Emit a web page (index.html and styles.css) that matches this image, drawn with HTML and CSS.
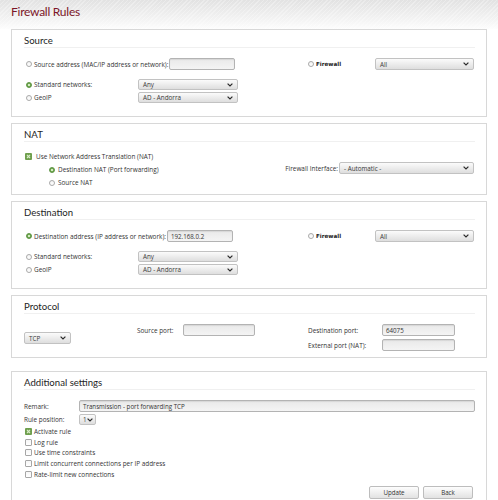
FILE: index.html
```html
<!DOCTYPE html>
<html>
<head>
<meta charset="utf-8">
<title>Firewall Rules</title>
<link rel="stylesheet" href="styles.css">
</head>
<body>
<header class="top"><h1>Firewall Rules</h1></header>
<main class="page">
  <section class="box box-addr">
    <h2>Source</h2>
    <div class="addr-row">
      <div class="addr-left">
        <label class="opt"><span class="radio"></span>Source address (MAC/IP address or network):</label>
        <span class="input w-addr"></span>
      </div>
      <label class="opt"><span class="radio"></span><b class="fw">Firewall</b></label>
      <span class="select w-all">All<svg class="chev" viewBox="0 0 6 4" width="6" height="4"><polyline points="0.6,0.6 3,3 5.4,0.6"/></svg></span>
    </div>
    <div class="net-grid">
      <label class="opt"><span class="radio on"></span>Standard networks:</label>
      <span class="select w-net">Any<svg class="chev" viewBox="0 0 6 4" width="6" height="4"><polyline points="0.6,0.6 3,3 5.4,0.6"/></svg></span>
      <label class="opt"><span class="radio"></span>GeoIP</label>
      <span class="select w-net">AD - Andorra<svg class="chev" viewBox="0 0 6 4" width="6" height="4"><polyline points="0.6,0.6 3,3 5.4,0.6"/></svg></span>
    </div>
  </section>

  <section class="box box-nat">
    <h2>NAT</h2>
    <div class="nat-body">
      <div class="nat-left">
        <label class="opt chk-row"><svg class="check" viewBox="0 0 7 7" width="7" height="7"><rect x="0" y="0" width="7" height="7" rx="1" fill="#6f9f4e"/><path d="M2 2 L5 5 M5 2 L2 5" stroke="#d9ecc8" stroke-width="1.1"/></svg>Use Network Address Translation (NAT)</label>
        <label class="opt sub"><span class="radio on"></span>Destination NAT (Port forwarding)</label>
        <label class="opt sub"><span class="radio"></span>Source NAT</label>
      </div>
      <div class="nat-right">
        <span class="lbl">Firewall Interface:</span>
        <span class="select w-iface">- Automatic -<svg class="chev" viewBox="0 0 6 4" width="6" height="4"><polyline points="0.6,0.6 3,3 5.4,0.6"/></svg></span>
      </div>
    </div>
  </section>

  <section class="box box-addr">
    <h2>Destination</h2>
    <div class="addr-row">
      <div class="addr-left">
        <label class="opt"><span class="radio on"></span>Destination address (IP address or network):</label>
        <span class="input w-addr">192.168.0.2</span>
      </div>
      <label class="opt"><span class="radio"></span><b class="fw">Firewall</b></label>
      <span class="select w-all">All<svg class="chev" viewBox="0 0 6 4" width="6" height="4"><polyline points="0.6,0.6 3,3 5.4,0.6"/></svg></span>
    </div>
    <div class="net-grid">
      <label class="opt"><span class="radio"></span>Standard networks:</label>
      <span class="select w-net">Any<svg class="chev" viewBox="0 0 6 4" width="6" height="4"><polyline points="0.6,0.6 3,3 5.4,0.6"/></svg></span>
      <label class="opt"><span class="radio"></span>GeoIP</label>
      <span class="select w-net">AD - Andorra<svg class="chev" viewBox="0 0 6 4" width="6" height="4"><polyline points="0.6,0.6 3,3 5.4,0.6"/></svg></span>
    </div>
  </section>

  <section class="box box-proto">
    <h2>Protocol</h2>
    <div class="proto-grid">
      <span class="select w-proto">TCP<svg class="chev" viewBox="0 0 6 4" width="6" height="4"><polyline points="0.6,0.6 3,3 5.4,0.6"/></svg></span>
      <span class="lbl src-lbl">Source port:</span>
      <span class="input src-in"></span>
      <span class="lbl dst-lbl">Destination port:</span>
      <span class="input dst-in">64075</span>
      <span class="lbl ext-lbl">External port (NAT):</span>
      <span class="input ext-in"></span>
    </div>
  </section>

  <section class="box box-add">
    <h2>Additional settings</h2>
    <div class="add-grid">
      <span class="lbl">Remark:</span>
      <span class="input w-remark">Transmission - port forwarding TCP</span>
      <span class="lbl">Rule position:</span>
      <span class="select w-pos">1<svg class="chev" viewBox="0 0 6 4" width="6" height="4"><polyline points="0.6,0.6 3,3 5.4,0.6"/></svg></span>
    </div>
    <div class="checks">
      <label class="opt"><svg class="check" viewBox="0 0 7 7" width="7" height="7"><rect x="0" y="0" width="7" height="7" rx="1" fill="#6f9f4e"/><path d="M2 2 L5 5 M5 2 L2 5" stroke="#d9ecc8" stroke-width="1.1"/></svg>Activate rule</label>
      <label class="opt"><span class="box-chk"></span>Log rule</label>
      <label class="opt"><span class="box-chk"></span>Use time constraints</label>
      <label class="opt"><span class="box-chk"></span>Limit concurrent connections per IP address</label>
      <label class="opt"><span class="box-chk"></span>Rate-limit new connections</label>
    </div>
    <div class="actions">
      <span class="btn">Update</span>
      <span class="btn">Back</span>
    </div>
  </section>
</main>
<div class="bottom-line"></div>
</body>
</html>
```

FILE: styles.css
```css
* { box-sizing: border-box; margin: 0; padding: 0; }

html, body {
  width: 498px;
  height: 500px;
  overflow: hidden;
}

body {
  margin: 0;
  background: #fff;
  font-family: "Open Sans", "Noto Sans", sans-serif;
  font-size: 6.4px;
  color: #333;
}

.top {
  height: 29px;
  padding: 4px 0 0 11px;
  background:
    repeating-linear-gradient(135deg, rgba(255,255,255,0.3) 0 1px, rgba(0,0,0,0) 1px 3px),
    linear-gradient(#e2e2e2, #f4f4f4 70%, #fdfdfd);
}

.top h1 {
  font-family: Lato, "Open Sans", sans-serif;
  font-weight: 400;
  font-size: 12px;
  letter-spacing: -0.25px;
  line-height: 16px;
  color: #7c1528;
}

.page {
  padding: 0 11px;
  display: flex;
  flex-direction: column;
  gap: 6px;
}

.box {
  border: 1px solid #d8d8d8;
  background: #fff;
  padding: 0 11px 0 12px;
}

.box h2 {
  font-family: Lato, "Open Sans", sans-serif;
  font-weight: 400;
  font-size: 9.6px;
  line-height: 12px;
  height: 18px;
  padding-top: 5px;
  color: #1e1e1e;
  border-bottom: 1px solid #f0f0f0;
}

/* generic option label: radio/checkbox + text */
.opt {
  display: flex;
  align-items: center;
  white-space: nowrap;
}

.radio {
  width: 6px;
  height: 6px;
  border-radius: 50%;
  border: 1px solid #a9a9a9;
  background: linear-gradient(#f4f4f4, #fff);
  margin: 0 2px 0 2px;
  flex: none;
}

.radio.on {
  border-color: #5b9140;
  background: radial-gradient(circle, #d6ebc4 0 1.2px, #6aa54a 1.6px);
}

.box-chk {
  width: 7px;
  height: 7px;
  border: 1px solid #a6a6a6;
  border-radius: 1px;
  background: linear-gradient(#f6f6f6, #fff);
  margin: 0 2px 0 1px;
  flex: none;
}

.check {
  display: block;
  flex: none;
  margin: 0 2px 0 1px;
}

.fw {
  font-family: "DejaVu Sans", Verdana, sans-serif;
  font-weight: 700;
  font-size: 5.6px;
  color: #222;
}

.lbl {
  white-space: nowrap;
}

/* form controls */
.input {
  display: flex;
  align-items: center;
  height: 12px;
  padding-left: 3px;
  border: 1px solid #b3b3b3;
  border-radius: 2px;
  background: linear-gradient(#e9e9e9, #f4f4f4);
  box-shadow: inset 0 1px 1px rgba(0,0,0,0.08);
  font-size: 6.2px;
  color: #333;
  white-space: nowrap;
}

.select {
  display: flex;
  align-items: center;
  justify-content: space-between;
  height: 12px;
  padding: 0 4px 0 4px;
  border: 1px solid #c2c2c2;
  border-radius: 2px;
  background: linear-gradient(#fbfbfb, #dedede);
  font-size: 6.3px;
  color: #3a3a3a;
  white-space: nowrap;
}

.chev {
  display: block;
  fill: none;
  stroke: #2a2a2a;
  stroke-width: 1.2;
  flex: none;
}

/* Source / Destination boxes */
.box-addr {
  padding-bottom: 13px;
}

.addr-row {
  display: grid;
  grid-template-columns: 282px 69px 99px;
  align-items: center;
  height: 12px;
  margin-top: 10px;
}

.addr-left {
  display: flex;
  align-items: center;
}

.w-addr {
  width: 66px;
  margin-left: 1px;
}

.w-all {
  width: 99px;
}

.net-grid {
  display: grid;
  grid-template-columns: 114px 100px;
  grid-auto-rows: 11px;
  row-gap: 2px;
  align-items: center;
  margin-top: 9px;
}

.net-grid .select {
  height: 11px;
}

/* NAT */
.box-nat {
  padding-bottom: 5px;
}

.nat-body {
  display: flex;
  justify-content: space-between;
  align-items: center;
  margin-top: 8px;
}

.nat-left {
  display: grid;
  grid-auto-rows: 13px;
  align-items: center;
}

.nat-left .chk-row .check {
  margin-right: 4px;
}

.nat-left .sub {
  padding-left: 23px;
}

.nat-left .sub .radio {
  margin-right: 3px;
}

.nat-right {
  display: flex;
  align-items: center;
  gap: 1px;
  margin-top: -3px;
  margin-right: 1px;
}

.w-iface {
  width: 135px;
}

/* Protocol */
.box-proto {
  padding-bottom: 6px;
}

.proto-grid {
  display: grid;
  grid-template-columns: 113px 46px 72px 53px 74px 73px;
  grid-template-rows: 12px 12px;
  row-gap: 3px;
  align-items: center;
  margin-top: 10px;
}

.w-proto {
  grid-row: 1 / 3;
  width: 47px;
  margin-top: 1px;
}

.src-lbl { grid-column: 2; grid-row: 1; }
.src-in  { grid-column: 3; grid-row: 1; }
.dst-lbl { grid-column: 5; grid-row: 1; }
.dst-in  { grid-column: 6; grid-row: 1; }
.ext-lbl { grid-column: 5; grid-row: 2; }
.ext-in  { grid-column: 6; grid-row: 2; }

/* Additional settings */
.box-add {
  margin-top: 7px;
  border-bottom: none;
  padding-bottom: 1px;
}

.add-grid {
  display: grid;
  grid-template-columns: 55px 1fr;
  grid-template-rows: 12px 11px;
  row-gap: 2px;
  align-items: center;
  margin-top: 10px;
}

.w-remark {
  width: 396px;
}

.w-pos {
  width: 17px;
  height: 11px;
  padding: 0 2px 0 3px;
}

.checks {
  display: grid;
  grid-auto-rows: 10.8px;
  align-items: center;
  margin-top: 1px;
}

.actions {
  display: flex;
  justify-content: flex-end;
  gap: 4px;
  margin-top: 6px;
  padding-right: 2px;
}

.btn {
  display: flex;
  align-items: center;
  justify-content: center;
  width: 50px;
  height: 13px;
  border: 1px solid #bdbdbd;
  border-radius: 2px;
  background: linear-gradient(#fdfdfd, #e2e2e2);
  font-size: 6.2px;
  color: #333;
}

.bottom-line {
  height: 1px;
  background: #5a5a5a;
}
```
